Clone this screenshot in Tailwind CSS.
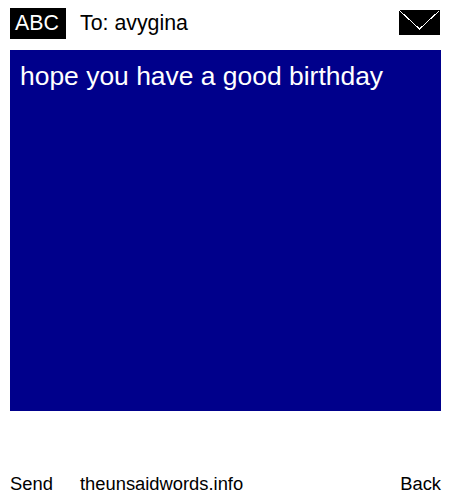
<!DOCTYPE html>
<html lang="en">
<head>
    <meta charset="UTF-8">
    <title>The Unsaid Words</title>
    <script src="https://cdn.jsdelivr.net/npm/@tailwindcss/browser@4"></script>
</head>
<body class="bg-white font-['Liberation_Sans',Arial,sans-serif] text-black">
    <div class="w-[450px] h-[500px] overflow-hidden px-[10px] pt-2 flex flex-col">
        <!-- top row -->
        <header class="h-[31px] flex items-center">
            <div class="w-[56px] h-[31px] bg-black text-white text-[21.33px] leading-[31px] pl-[5px]">ABC</div>
            <div class="ml-[14px] text-[21.33px] leading-[31px]">To: avygina</div>
            <svg class="ml-auto mt-[-2px]" width="41" height="25" viewBox="0 0 41 25" shape-rendering="crispEdges">
                <rect width="41" height="25" fill="#000"/>
                <path d="M0.5 0.5L20.5 19L40.5 0.5" fill="none" stroke="#fff" stroke-width="1"/>
            </svg>
        </header>

        <main class="mt-[11px] w-[431px] h-[361px] bg-[#00008b] text-white text-[26.45px] leading-[31px] px-[10px] pt-[11px]">
            hope you have a good birthday
        </main>

        <footer class="mt-[61px] flex text-[18.35px] leading-[24px] w-[431px]">
            <span class="w-[70px]">Send</span>
            <span>theunsaidwords.info</span>
            <span class="ml-auto">Back</span>
        </footer>
    </div>
</body>
</html>
